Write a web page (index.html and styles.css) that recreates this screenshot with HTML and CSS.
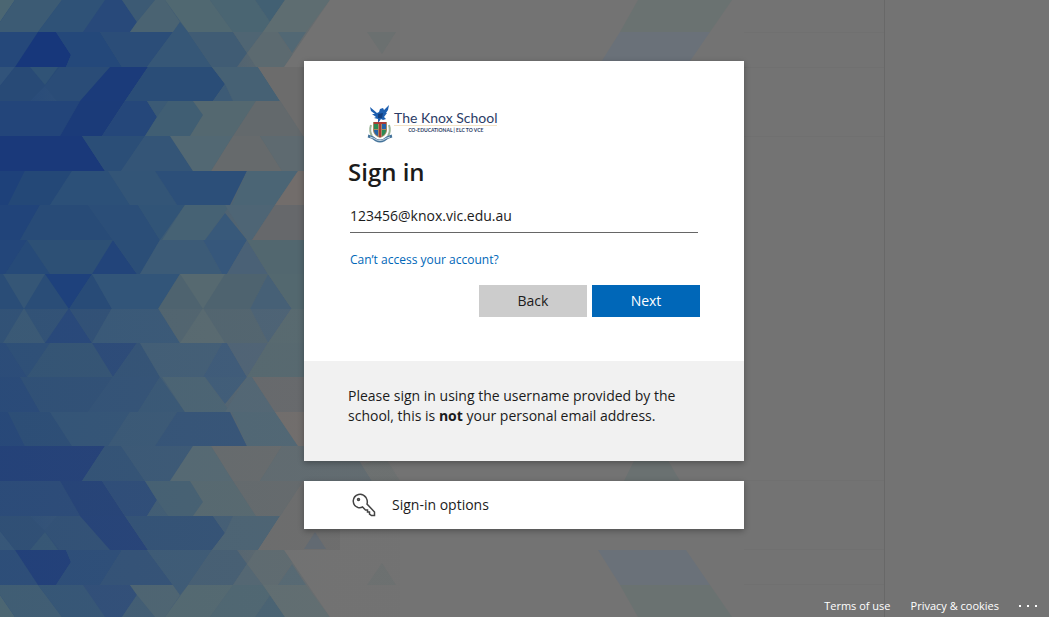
FILE: index.html
```
<!DOCTYPE html>
<html lang="en">
<head>
  <meta charset="UTF-8">
  <meta name="viewport" content="width=device-width, initial-scale=1.0">
  <title>Sign in to your account</title>
  <link rel="stylesheet" href="styles.css">
</head>
<body>
  <svg class="background" viewBox="0 0 1049 617" preserveAspectRatio="xMinYMin slice" aria-hidden="true">
    <defs>
      <linearGradient id="fade" gradientUnits="userSpaceOnUse" x1="0" y1="0" x2="400" y2="0">
        <stop offset="0" stop-color="#25487a"/>
        <stop offset=".4" stop-color="#3b5a76"/>
        <stop offset=".7" stop-color="#5e696e"/>
        <stop offset=".85" stop-color="#6e6f70"/>
        <stop offset="1" stop-color="#737373"/>
      </linearGradient>
      <linearGradient id="tint" gradientUnits="userSpaceOnUse" x1="0" y1="0" x2="340" y2="0">
        <stop offset="0" stop-color="#4f6673"/>
        <stop offset="1" stop-color="#737373"/>
      </linearGradient>
      <!-- upper half, the lower half is the same thing flipped -->
      <g id="half">
        <path fill="url(#fade)" d="M0 0H400V309H0z"/>
        <!-- row 1 -->
        <path fill="#4b6672" d="M0 0H15L0 22z"/>
        <path fill="#3c5b74" d="M15 0H62L38 32H0V22z"/>
        <path fill="#2f5277" d="M62 0H105L83 32H38z"/>
        <path fill="#28497a" d="M105 0H122L137 22L130 32H83z"/>
        <path fill="#3c5a74" d="M122 0H155L137 22z"/>
        <path fill="#4a6372" d="M155 0H165L180 22L173 32H130L137 22z"/>
        <path fill="#506871" d="M165 0H210L233 32H188z"/>
        <path fill="#4a6572" d="M210 0H255L270 22L263 32H233z"/>
        <path fill="#426073" d="M255 0H285L270 22z"/>
        <path fill="#5e6d71" d="M285 0H330L306 32H263z"/>
        <!-- row 2 -->
        <path fill="#25487a" d="M0 32H38L15 67H0z"/>
        <path fill="#17377b" d="M38 32H56L71 55L66 67H15z"/>
        <path fill="#24487a" d="M56 32H100L122 67H66L71 55z"/>
        <path fill="#2b4d78" d="M100 32H173L147 67H122z"/>
        <path fill="#365777" d="M173 32L180 22L188 32L212 67H147z"/>
        <path fill="#405c74" d="M188 32H233L247 53L237 67H212z"/>
        <path fill="#4f6573" d="M233 32H263L247 53z"/>
        <path fill="#5c6a70" d="M263 32H278L292 55L284 67H256L247 53z"/>
        <path fill="#526874" d="M278 32H306L292 53z"/>
        <path fill="#727272" d="M330 0H400V101H280L258 67H284z"/>
        <!-- row 3 -->
        <path fill="#31537a" d="M0 67H15L0 86z"/>
        <path fill="#284a76" d="M15 67H60L45 86L30 101H0V86z"/>
        <path fill="#305376" d="M30 67H58L45 85z"/>
        <path fill="#2a4c77" d="M60 67H110L87 101H57L45 86z"/>
        <path fill="#1b3b7a" d="M110 67H148L125 101H80z"/>
        <path fill="#2a4d77" d="M148 67H212L225 84L213 101H125z"/>
        <path fill="#466174" d="M212 67H258L280 101H233L225 84z"/>
        <path fill="#3d5b76" d="M225 84L233 101H213z"/>
        <path fill="#6c6c6c" d="M258 67H340V136H303z"/>
        <!-- row 4 -->
        <path fill="#23457a" d="M0 101H80L60 136H0z"/>
        <path fill="#1b3b79" d="M80 101H125L102 136H60z"/>
        <path fill="#25477a" d="M125 101H147L157 117L145 136H102z"/>
        <path fill="#3b5a75" d="M147 101H168L157 117z"/>
        <path fill="#405e73" d="M168 101H193L203 115L190 136H145L157 117z"/>
        <path fill="#546870" d="M193 101H256L233 136H190L203 115z"/>
        <path fill="#63696c" d="M256 101H280L303 136H233z"/>
        <!-- row 5 -->
        <path fill="#1a397a" d="M0 136H82L105 171H0z"/>
        <path fill="#2b4e77" d="M82 136H145L121 171H105z"/>
        <path fill="#345577" d="M145 136H170L193 171H121z"/>
        <path fill="#526873" d="M170 136H233L211 171H193z"/>
        <path fill="#666a6c" d="M233 136H260L282 171H211z"/>
        <path fill="#5e6a70" d="M260 136H372L350 171H282z"/>
        <path fill="#6b7070" d="M372 136H400L385 160L362 152z"/>
        <!-- row 6 -->
        <path fill="#1e417a" d="M0 171H25L8 205H0z"/>
        <path fill="#244877" d="M25 171H72L50 205H8z"/>
        <path fill="#2c5078" d="M72 171H108L130 205H50z"/>
        <path fill="#335577" d="M108 171H155L177 205H130z"/>
        <path fill="#2c4f79" d="M155 171H247L230 205H177z"/>
        <path fill="#4b6575" d="M247 171H298L275 205H232z"/>
        <path fill="#726d6b" d="M298 171H340V205H275z"/>
        <!-- row 7 -->
        <path fill="#21447a" d="M0 205H40L20 240H0z"/>
        <path fill="#284b77" d="M40 205H88L113 240H20z"/>
        <path fill="#2b4e78" d="M88 205H138L160 240H113z"/>
        <path fill="#315477" d="M138 205H185L160 240z"/>
        <path fill="#466274" d="M185 205H230L205 240H162z"/>
        <path fill="#38597a" d="M225 213L247 240H205z"/>
        <path fill="#4e6575" d="M225 205H275L252 240H247z"/>
        <path fill="#66686b" d="M275 205H340V240H252z"/>
        <!-- row 8 -->
        <path fill="#23467a" d="M0 240H27L5 274H0z"/>
        <path fill="#264a78" d="M27 240L50 274H5z"/>
        <path fill="#2d5075" d="M27 240H113L92 274H50z"/>
        <path fill="#22447a" d="M113 240L137 274H92z"/>
        <path fill="#2b4e77" d="M113 240H160L140 274H137z"/>
        <path fill="#3c5b77" d="M160 240H203L222 274H140z"/>
        <path fill="#36577b" d="M203 240H247L227 274H222z"/>
        <path fill="#4a6176" d="M247 240L268 274H227z"/>
        <path fill="#52676f" d="M247 240H340V274H268z"/>
        <!-- row 9 -->
        <path fill="#2a4d77" d="M0 274H92L69 309H0z"/>
        <path fill="#355676" d="M3 274H45L24 309z"/>
        <path fill="#1e417c" d="M45 274H92L69 309z"/>
        <path fill="#284b77" d="M92 274L112 309H69z"/>
        <path fill="#325579" d="M92 274H180L158 309H112z"/>
        <path fill="#4e636f" d="M180 274H268L250 309H158z"/>
        <path fill="#566970" d="M180 274H225L203 309z"/>
        <path fill="#466076" d="M268 274L292 309H250z"/>
        <path fill="#53686f" d="M268 274H340V309H292z"/>
        <!-- faint shapes on the grey side -->
        <path fill="#6b7070" d="M367 32H396L382 54z"/>
        <path fill="#6a7271" d="M638 0H732L710 32H620z"/>
        <path fill="#68707a" d="M620 32H710L686 67H598z" opacity=".8"/>
        <path fill="#6a7171" d="M624 136H680L666 160H636z"/>
        <path fill="#707070" d="M744 32H884V33H744zM744 67H884V68H744zM744 136H884V137H744z"/>
      </g>
    </defs>
    <path fill="#737373" d="M0 0H1049V617H0z"/>
    <use href="#half"/>
    <use href="#half" transform="translate(0 617) scale(1 -1)"/>
    <path fill="url(#tint)" opacity=".2" d="M0 309H400V617H0z"/>
    <path fill="#626a72" d="M315 532L326 549H304z"/>
    <path fill="#686868" d="M884 0H885V617H884z"/>
  </svg>

  <main class="main">
    <div class="card">
      <form class="sign-in">
        <div class="logo">
          <svg class="crest" viewBox="0 0 28 38" aria-hidden="true">
            <path fill="#1d5fb0" d="M4 2L11 8L13 7L14 4L17 3L18 5L23 0L22 5L20 8L21 8L18 12L20 14L17 15L15 14L12 18L12 14L8 13L10 12L6 9L9 9L5 6z"/>
            <path fill="#123f80" d="M12 9L17 8L16 13L12 13z"/>
            <path fill="#a58a64" d="M7 17H21V26Q20 31 14 33Q8 31 7 26z"/>
            <path fill="#2c8a55" d="M8 18H12V24H8zM16 25H20Q20 29 16 31z"/>
            <path fill="#2463a8" d="M16 18H20V24H16zM8 25H12V31Q8 29 8 25z"/>
            <path fill="#a93b36" d="M8 17H20V19H15V32H13V19H8z"/>
            <path fill="none" stroke="#9bb598" stroke-width="2" d="M5 20Q3 26 6 31M23 20Q25 26 22 31"/>
            <path fill="none" stroke="#46749b" stroke-width="3" d="M2 31Q7 32 10 35Q14 37 18 35Q21 32 26 31"/>
            <path fill="none" stroke="#c6d8e4" d="M4 32Q8 33 11 35Q14 36 17 35Q20 33 24 32"/>
          </svg>
          <div class="school">
            <div class="school-name">The Knox School</div>
            <div class="school-tag">CO-EDUCATIONAL | ELC TO VCE</div>
          </div>
        </div>
        <h1>Sign in</h1>
        <input type="text" class="username" value="123456@knox.vic.edu.au" aria-label="Username">
        <a href="#" class="help">Can’t access your account?</a>
        <div class="buttons">
          <button type="button" class="button">Back</button>
          <button type="button" class="button primary">Next</button>
        </div>
      </form>
      <p class="notice">Please sign in using the username provided by the school, this is <strong>not</strong> your personal email address.</p>
    </div>

    <button type="button" class="card options">
      <svg class="key" viewBox="0 0 24 24" aria-hidden="true">
        <path d="M15 11Q16 8 14 4.500Q11 .5 6.500 1.500Q1.500 3 1.200 8Q1.500 13 6 14.500Q8.500 15 10.500 14L13.500 17H15.500V19H17.500V21L19.500 22.500H22.500V19z"/>
        <circle cx="6.500" cy="6.500" r="1"/>
      </svg>
      Sign-in options
    </button>
  </main>

  <footer class="footer">
    <a href="#">Terms of use</a>
    <a href="#">Privacy &amp; cookies</a>
    <button type="button" class="more" aria-label="More">
      <svg viewBox="0 0 18 2" aria-hidden="true"><path d="M0 0H2V2H0zM8 0H10V2H8zM16 0H18V2H16z"/></svg>
    </button>
  </footer>
</body>
</html>
```
FILE: styles.css
```
* { box-sizing: border-box; }
body { display: flex; flex-direction: column; min-height: 100vh; margin: 0; font-family: "Open Sans", "Noto Sans", sans-serif; font-size: 14px; line-height: 20px; color: #1b1b1b; background-color: #737373; }
button, input { font: inherit; color: inherit; }
button { border: none; cursor: pointer; }
a { text-decoration: none; }
a:hover { text-decoration: underline; }

.background { position: absolute; top: 0; left: 0; z-index: -1; width: 100%; height: 100%; }

.main { flex: 1; display: flex; flex-direction: column; align-items: center; justify-content: center; gap: 20px; padding-right: 1px; }
.card { width: 100%; max-width: 440px; background: white; box-shadow: 0 2px 6px rgba(0,0,0,0.3); }
.sign-in { display: flex; flex-direction: column; padding: 44px; }

.logo { display: flex; height: 36px; margin-left: 18px; }
.crest { width: 28px; height: 38px; }
.school { font-family: Lato, sans-serif; color: #2b3c66; }
.school-name { height: 21px; padding-top: 3px; font-size: 14px; line-height: 20px; border-bottom: 1px solid #f3e3c8; }
.school-tag { font-size: 5px; line-height: 8px; font-weight: bold; text-align: center; }

h1 { margin: 17px 0 11px; font-size: 24px; line-height: 28px; font-weight: 600; }
.username { height: 36px; margin: 0 2px; padding: 2px 0 0; border: none; border-bottom: 1px solid #666; border-radius: 0; background: none; outline: none; }
.help { align-self: flex-start; margin: 17px 2px 15px; font-size: 12px; color: #0067b8; }
.buttons { display: flex; justify-content: flex-end; gap: 5px; }
.button { width: 108px; height: 32px; background-color: #ccc; }
.button:hover { background-color: #b2b2b2; }
.primary { background-color: #0067b8; color: white; }
.primary:hover { background-color: #005da6; }
.notice { margin: 0; padding: 25px 44px 35px; background-color: #f1f1f1; }

.options { display: flex; align-items: center; gap: 16px; height: 48px; padding: 0 48px; text-align: left; }
.key { width: 24px; height: 24px; fill: none; stroke: #444; stroke-width: 1.5; }

.footer { display: flex; justify-content: flex-end; align-items: center; gap: 20px; height: 27px; padding: 4px 12px 0; font-size: 11px; font-weight: 500; color: white; }
.footer a { color: white; }
.more { padding: 0; background: none; }
.more svg { display: block; width: 18px; height: 2px; fill: white; }
```
